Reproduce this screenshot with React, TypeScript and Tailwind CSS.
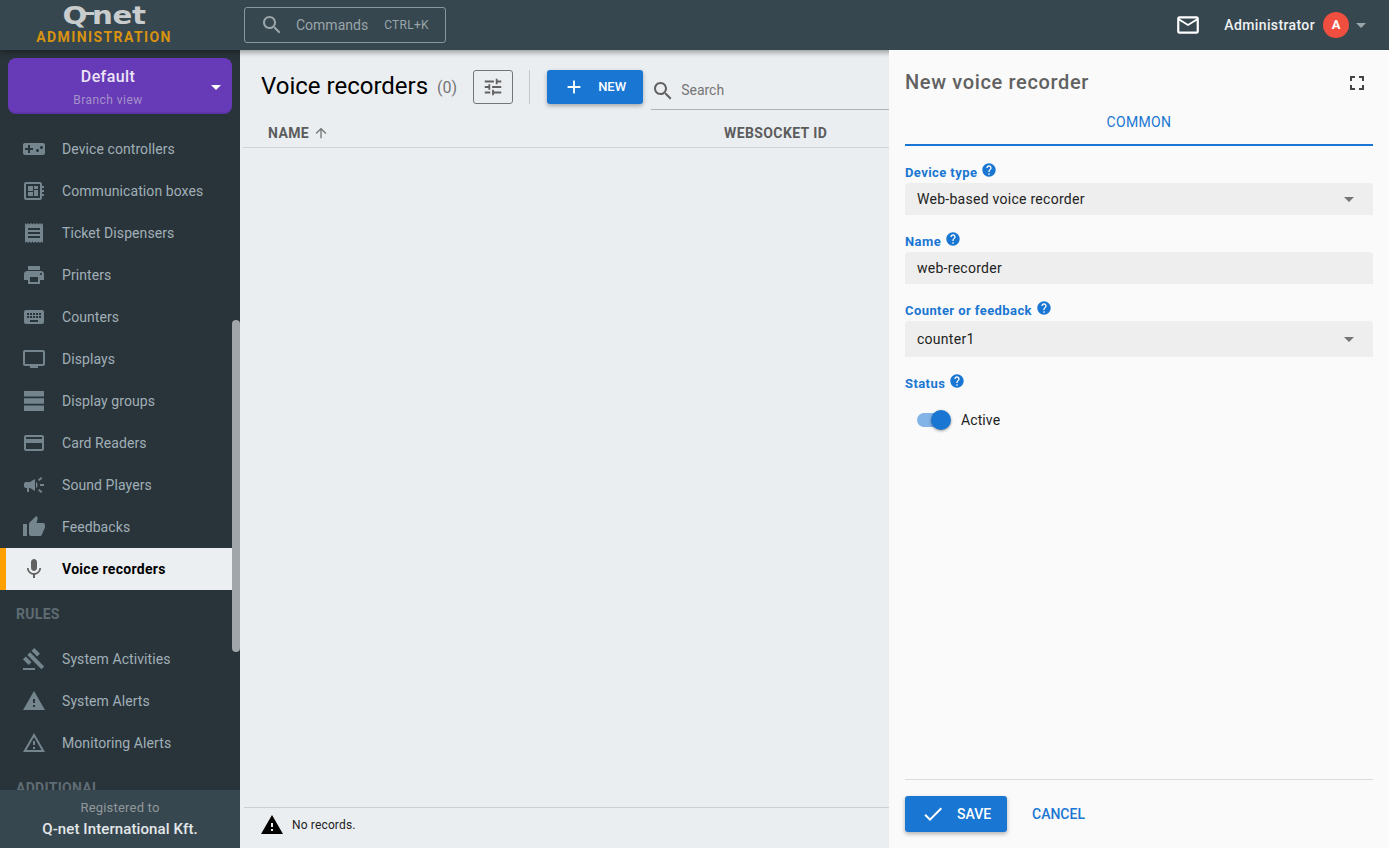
import React from 'react';

const P = {
  game: 'M21 6H3c-1.1 0-2 .9-2 2v8c0 1.1.9 2 2 2h18c1.1 0 2-.9 2-2V8c0-1.1-.9-2-2-2zm-10 7H8v3H6v-3H3v-2h3V8h2v3h3v2zm4.5 2c-.83 0-1.5-.67-1.5-1.5s.67-1.5 1.5-1.5 1.5.67 1.5 1.5-.67 1.5-1.5 1.5zm4-3c-.83 0-1.5-.67-1.5-1.5S18.67 9 19.5 9s1.5.67 1.5 1.5-.67 1.5-1.5 1.5z',
  board: 'M22 9V7h-2V5c0-1.1-.9-2-2-2H4c-1.1 0-2 .9-2 2v14c0 1.1.9 2 2 2h14c1.1 0 2-.9 2-2v-2h2v-2h-2v-2h2v-2h-2V9h2zm-4 10H4V5h14v14zM6 13h5v4H6zm6-6h4v3h-4zM6 7h5v5H6zm6 4h4v6h-4z',
  receipt: 'M18 17H6v-2h12v2zm0-4H6v-2h12v2zm0-4H6V7h12v2zM3 22l1.5-1.5L6 22l1.5-1.5L9 22l1.5-1.5L12 22l1.5-1.5L15 22l1.5-1.5L18 22l1.5-1.5L21 22V2l-1.5 1.5L18 2l-1.5 1.5L15 2l-1.5 1.5L12 2l-1.5 1.5L9 2 7.5 3.5 6 2 4.5 3.5 3 2v20z',
  print: 'M19 8H5c-1.66 0-3 1.34-3 3v6h4v4h12v-4h4v-6c0-1.66-1.34-3-3-3zm-3 11H8v-5h8v5zm3-7c-.55 0-1-.45-1-1s.45-1 1-1 1 .45 1 1-.45 1-1 1zm-1-9H6v4h12V3z',
  keyboard: 'M20 5H4c-1.1 0-1.99.9-1.99 2L2 17c0 1.1.9 2 2 2h16c1.1 0 2-.9 2-2V7c0-1.1-.9-2-2-2zm-9 3h2v2h-2V8zm0 3h2v2h-2v-2zM8 8h2v2H8V8zm0 3h2v2H8v-2zm-1 2H5v-2h2v2zm0-3H5V8h2v2zm9 7H8v-2h8v2zm0-4h-2v-2h2v2zm0-3h-2V8h2v2zm3 3h-2v-2h2v2zm0-3h-2V8h2v2z',
  tv: 'M21 3H3c-1.1 0-2 .9-2 2v12c0 1.1.9 2 2 2h5v2h8v-2h5c1.1 0 1.99-.9 1.99-2L23 5c0-1.1-.9-2-2-2zm0 14H3V5h18v12z',
  stream: 'M2 2h20v5.6H2zM2 9.2h20v5.6H2zM2 16.4h20V22H2z',
  card: 'M20 4H4c-1.11 0-1.99.89-1.99 2L2 18c0 1.11.89 2 2 2h16c1.11 0 2-.89 2-2V6c0-1.11-.89-2-2-2zm0 14H4v-6h16v6zm0-10H4V6h16v2z',
  campaign: 'M18 11v2h4v-2h-4zm-2 6.61c.96.71 2.21 1.65 3.2 2.39.4-.53.8-1.07 1.2-1.6-.99-.74-2.24-1.68-3.2-2.4-.4.54-.8 1.08-1.2 1.61zM20.4 5.6c-.4-.53-.8-1.07-1.2-1.6-.99.74-2.24 1.68-3.2 2.4.4.53.8 1.07 1.2 1.6.96-.72 2.21-1.65 3.2-2.4zM4 9c-1.1 0-2 .9-2 2v2c0 1.1.9 2 2 2h1v4h2v-4h1l5 3V6L8 9H4zm11.5 3c0-1.33-.58-2.53-1.5-3.35v6.69c.92-.81 1.5-2.01 1.5-3.34z',
  thumb: 'M1 21h4V9H1v12zm22-11c0-1.1-.9-2-2-2h-6.31l.95-4.57.03-.32c0-.41-.17-.79-.44-1.06L14.17 1 7.59 7.59C7.22 7.95 7 8.45 7 9v10c0 1.1.9 2 2 2h9c.83 0 1.54-.5 1.84-1.22l3.02-7.05c.09-.23.14-.47.14-.73v-2z',
  mic: 'M12 14c1.66 0 2.99-1.34 2.99-3L15 5c0-1.66-1.34-3-3-3S9 3.34 9 5v6c0 1.66 1.34 3 3 3zm5.3-3c0 3-2.54 5.1-5.3 5.1S6.7 14 6.7 11H5c0 3.41 2.72 6.23 6 6.72V21h2v-3.28c3.28-.48 6-3.3 6-6.72h-1.7z',
  gavel: 'M1 21h12v2H1v-2zM5.245 8.07l2.83-2.827 14.14 14.142-2.828 2.828L5.245 8.07zM12.317 1l5.657 5.656-2.83 2.83-5.654-5.66L12.317 1zM3.825 9.485l5.657 5.657-2.828 2.828-5.657-5.657 2.828-2.828z',
  warning: 'M1 21h22L12 2 1 21zm12-3h-2v-2h2v2zm0-4h-2v-4h2v4z',
  warningOutline: 'M12 5.99L19.53 19H4.47L12 5.99M12 2L1 21h22L12 2zm1 14h-2v2h2v-2zm0-6h-2v4h2v-4z',
  search: 'M15.5 14h-.79l-.28-.27C15.41 12.59 16 11.11 16 9.5 16 5.91 13.09 3 9.5 3S3 5.91 3 9.5 5.91 16 9.5 16c1.61 0 3.09-.59 4.23-1.57l.27.28v.79l5 4.99L20.49 19l-4.99-5zm-6 0C7.01 14 5 11.99 5 9.5S7.01 5 9.5 5 14 7.01 14 9.5 11.99 14 9.5 14z',
  tune: 'M3 17v2h6v-2H3zM3 5v2h10V5H3zm10 16v-2h8v-2h-8v-2h-2v6h2zM7 9v2H3v2h4v2h2V9H7zm14 4v-2H11v2h10zm-6-4h2V7h4V5h-4V3h-2v6z',
  fullscreen: 'M7 14H5v5h5v-2H7v-3zm-2-4h2V7h3V5H5v5zm12 7h-3v2h5v-5h-2v3zM14 5v2h3v3h2V5h-5z',
  help: 'M12 2C6.48 2 2 6.48 2 12s4.48 10 10 10 10-4.48 10-10S17.52 2 12 2zm1 17h-2v-2h2v2zm2.07-7.75l-.9.92C13.45 12.9 13 13.5 13 15h-2v-.5c0-1.1.45-2.1 1.17-2.83l1.24-1.26c.37-.36.59-.86.59-1.41 0-1.1-.9-2-2-2s-2 .9-2 2H8c0-2.21 1.79-4 4-4s4 1.79 4 4c0 .88-.36 1.68-.93 2.25z',
  add: 'M19 13h-6v6h-2v-6H5v-2h6V5h2v6h6v2z',
  check: 'M9 16.17L4.83 12l-1.42 1.41L9 19 21 7l-1.41-1.41z',
  mail: 'M20 4H4c-1.1 0-1.99.9-1.99 2L2 18c0 1.1.9 2 2 2h16c1.1 0 2-.9 2-2V6c0-1.1-.9-2-2-2zm0 14H4V8l8 5 8-5v10zm-8-7L4 6h16l-8 5z',
  arrowUp: 'M4 12l1.41 1.41L11 7.83V20h2V7.83l5.58 5.59L20 12l-8-8-8 8z',
};

function Icon({ d, className }: { d: string; className: string }) {
  return (
    <svg viewBox="0 0 24 24" fill="currentColor" className={className}>
      <path d={d} />
    </svg>
  );
}

function Caret({ className }: { className: string }) {
  return <div className={`h-0 w-0 border-x-[5px] border-t-[5px] border-x-transparent ${className}`} />;
}

const topItems = [
  { label: 'Device controllers', icon: P.game },
  { label: 'Communication boxes', icon: P.board },
  { label: 'Ticket Dispensers', icon: P.receipt },
  { label: 'Printers', icon: P.print },
  { label: 'Counters', icon: P.keyboard },
  { label: 'Displays', icon: P.tv },
  { label: 'Display groups', icon: P.stream },
  { label: 'Card Readers', icon: P.card },
  { label: 'Sound Players', icon: P.campaign },
  { label: 'Feedbacks', icon: P.thumb },
];

const ruleItems = [
  { label: 'System Activities', icon: P.gavel },
  { label: 'System Alerts', icon: P.warning },
  { label: 'Monitoring Alerts', icon: P.warningOutline },
];

function NavItem({ label, icon }: { label: string; icon: string }) {
  return (
    <div className="flex h-[42px] items-center gap-4 pl-[22px] text-[14px] tracking-[0.08px] text-[#a0afb7]">
      <Icon d={icon} className="h-6 w-6 shrink-0 text-[#74858e]" />
      <span>{label}</span>
    </div>
  );
}

function Sidebar() {
  return (
    <aside className="relative flex h-full w-[240px] shrink-0 flex-col overflow-hidden bg-[#29343a]">
      <div className="flex-1 overflow-hidden">
        <div className="px-2 pt-2">
          <div className="relative flex h-14 flex-col items-center rounded-lg border-b-2 border-[#5e35a8] bg-[#673ab7] pr-6 pt-2">
            <span className="text-[16px] font-medium leading-[22px] tracking-[0.4px] text-[#ece4f7]">Default</span>
            <span className="mt-1 text-[12px] leading-4 tracking-[0.45px] text-[#a592c9]">Branch view</span>
            <Caret className="absolute right-[11px] top-[27px] border-t-white" />
          </div>
        </div>
        <nav className="mt-[14px] w-[232px]">
          {topItems.map(item => (
            <NavItem key={item.label} {...item} />
          ))}
          <div className="flex h-[42px] items-center gap-4 border-l-[6px] border-[#ffa000] bg-[#eceff1] pl-4 text-[14px] font-bold tracking-[0.3px] text-black">
            <Icon d={P.mic} className="h-6 w-6 shrink-0 text-[#616161]" />
            <span>Voice recorders</span>
          </div>
          <div className="flex h-[48px] items-center pl-4 text-[14px] font-bold tracking-[0.3px] text-[#5f6c74]">RULES</div>
          {ruleItems.map(item => (
            <NavItem key={item.label} {...item} />
          ))}
          <div className="pl-4 pt-[14px] text-[14px] font-bold leading-5 tracking-[0.3px] text-[#5f6c74]">ADDITIONAL</div>
        </nav>
      </div>
      {/* overlay scrollbar */}
      <div className="absolute right-0 top-[270px] h-[332px] w-2 rounded-full bg-[#a0a6aa]" />
      <div className="relative flex h-[58px] shrink-0 flex-col items-center bg-[#37474f] pt-[9px]">
        <span className="text-[13px] leading-[18px] tracking-[0.2px] text-[#90989c]">Registered to</span>
        <span className="mt-[2px] text-[15px] font-medium leading-5 tracking-[0.1px] text-[#e4e8ea]">Q-net International Kft.</span>
      </div>
    </aside>
  );
}

function Header() {
  return (
    <header className="relative z-10 flex h-[50px] shrink-0 items-center bg-[#37474f] pr-[23px] shadow-[0_2px_6px_rgba(0,0,0,0.4)]">
      <div className="-mt-[2px] flex w-[244px] shrink-0 flex-col items-center pr-[36px]">
        <div className="flex origin-center scale-x-[1.22] items-start font-['DejaVu_Sans',sans-serif] text-[24px] font-bold leading-[26px] tracking-[-0.3px] text-[#c9cccd]">
          <span>Q</span>
          <span className="-ml-[2px] mt-[9px] h-[3px] w-[8px] bg-[#c9cccd]" />
          <span className="-ml-[2px]">net</span>
        </div>
        <span className="text-[14px] font-bold leading-[17px] tracking-[1.4px] text-[#d9930f]">ADMINISTRATION</span>
      </div>
      <div className="flex h-9 w-[202px] items-center rounded-[3px] border border-[#8a979d] pl-[15px] text-[#9aa5aa]">
        <Icon d={P.search} className="h-6 w-6 shrink-0" />
        <span className="ml-[12px] text-[14px]">Commands</span>
        <span className="ml-[16px] text-[12px] tracking-[0.3px]">CTRL+K</span>
      </div>
      <Icon d={P.mail} className="ml-auto h-[26px] w-[26px] text-white" />
      <span className="ml-[23px] text-[14px] font-medium tracking-[0.38px] text-[#eef1f2]">Administrator</span>
      <div className="ml-[8px] flex h-[26px] w-[26px] items-center justify-center rounded-full bg-[#f04e3e] text-[13px] font-bold text-white">A</div>
      <Caret className="ml-[7px] border-t-[#9aa5aa]" />
    </header>
  );
}

function Main() {
  return (
    <main className="flex h-full min-w-0 flex-1 flex-col overflow-hidden bg-[#ebeef1]">
      <div className="flex h-[60px] shrink-0 items-start pt-[20px]">
        <h1 className="ml-[21px] mt-[1px] text-[24px] leading-[30px] text-black">Voice recorders</h1>
        <span className="ml-[9px] mt-[8px] text-[16px] leading-5 text-[#757575]">(0)</span>
        <div className="ml-[16px] flex h-[34px] w-10 items-center justify-center rounded-[3px] border border-[#757575] text-[#616161]">
          <Icon d={P.tune} className="h-[22px] w-[22px]" />
        </div>
        <div className="ml-4 h-[34px] w-px bg-[#c4c8cb]" />
        <div className="ml-[17px] flex h-[34px] w-24 items-center rounded-[3px] bg-[#1976d2] pl-[16px] text-white shadow-[0_2px_4px_rgba(0,0,0,0.3)]">
          <Icon d={P.add} className="h-[22px] w-[22px]" />
          <span className="ml-[13px] text-[13px] font-medium">NEW</span>
        </div>
        <div className="ml-[8px] flex h-[40px] flex-1 items-center border-b border-[#b0b3b6] pt-[2px]">
          <Icon d={P.search} className="h-6 w-6 text-[#616161]" />
          <span className="ml-[6px] text-[14px] text-[#757575]">Search</span>
        </div>
      </div>
      <div className="ml-[3px] flex h-[38px] shrink-0 items-center border-b border-[#d0d3d6] pl-[25px] pt-[9px] text-[14px] font-bold tracking-[0.4px] text-[#5c5c5c]">
        <div className="flex w-[456px] items-center">
          <span>NAME</span>
          <Icon d={P.arrowUp} className="ml-1 h-4 w-4 text-[#757575]" />
        </div>
        <span>WEBSOCKET ID</span>
      </div>
      <div className="flex-1" />
      <div className="ml-1 flex h-[41px] shrink-0 items-center border-t border-[#ccd0d4] pb-[7px] pl-[16px]">
        <Icon d={P.warning} className="h-6 w-6 text-black" />
        <span className="ml-[8px] text-[12px] tracking-[0.15px] text-[#222]">No records.</span>
      </div>
    </main>
  );
}

function Label({ text, className }: { text: string; className: string }) {
  return (
    <div className={`flex items-start text-[13px] font-bold leading-4 tracking-[0.42px] text-[#1976d2] ${className}`}>
      <span className="mt-[1px]">{text}</span>
      <Icon d={P.help} className="ml-[4px] -mt-[2px] h-4 w-4" />
    </div>
  );
}

function Field({ value, select, className }: { value: string; select?: boolean; className: string }) {
  return (
    <div className={`flex items-center justify-between rounded-t-[4px] bg-[#eeeeee] pl-3 pr-[19px] text-[14px] tracking-[0.27px] text-[#222] ${className}`}>
      <span>{value}</span>
      {select && <Caret className="border-t-[#757575]" />}
    </div>
  );
}

function Panel() {
  return (
    <section className="relative z-20 flex h-full w-[500px] shrink-0 flex-col bg-[#fafafa] px-4">
      <div className="flex h-[50px] shrink-0 items-center justify-between pt-[15px]">
        <h2 className="-mt-[2px] text-[20px] font-medium tracking-[0.65px] text-[#616161]">New voice recorder</h2>
        <Icon d={P.fullscreen} className="mr-[4px] h-6 w-6 text-[#444]" />
      </div>
      <div className="flex h-[46px] shrink-0 items-center justify-center border-b-2 border-[#1976d2] text-[14px] tracking-[0.35px] text-[#1976d2]">
        COMMON
      </div>
      <Label text="Device type" className="mt-[18px] h-[19px]" />
      <Field value="Web-based voice recorder" select className="h-8" />
      <Label text="Name" className="mt-[18px] h-[19px]" />
      <Field value="web-recorder" className="h-8" />
      <Label text="Counter or feedback" className="mt-[18px] h-[19px]" />
      <Field value="counter1" select className="h-9" />
      <Label text="Status" className="mt-[18px] h-[19px]" />
      <div className="ml-3 mt-[14px] flex h-6 items-center">
        <div className="relative h-[14px] w-[30px] rounded-full bg-[#82b4e8]">
          <div className="absolute -right-[4px] -top-[3px] h-5 w-5 rounded-full bg-[#1976d2] shadow-[0_1px_3px_rgba(0,0,0,0.4)]" />
        </div>
        <span className="ml-[14px] text-[14px] tracking-[0.1px] text-[#222]">Active</span>
      </div>
      <div className="mt-auto flex h-[69px] shrink-0 items-start border-t border-[#dcdcdc] pt-[16px]">
        <div className="flex h-9 w-[102px] items-center rounded-[3px] bg-[#1976d2] pl-[16px] text-white shadow-[0_2px_4px_rgba(0,0,0,0.3)]">
          <Icon d={P.check} className="h-6 w-6" />
          <span className="ml-[12px] text-[14px] font-medium">SAVE</span>
        </div>
        <div className="ml-[25px] flex h-9 items-center text-[14px] font-medium text-[#1976d2]">CANCEL</div>
      </div>
    </section>
  );
}

export default function App() {
  return (
    <div className="flex h-screen w-full flex-col overflow-hidden font-['Roboto',sans-serif]">
      <Header />
      <div className="flex min-h-0 flex-1">
        <Sidebar />
        <Main />
        <Panel />
      </div>
    </div>
  );
}
